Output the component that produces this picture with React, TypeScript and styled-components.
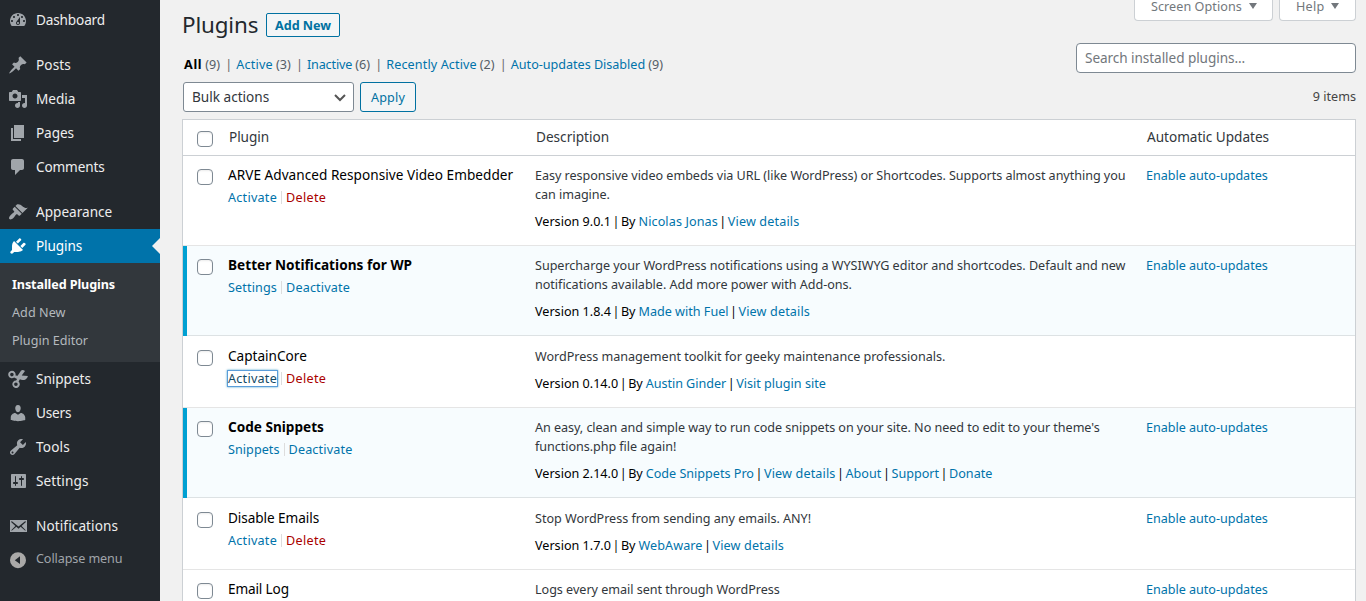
import React from "react";
import styled, { createGlobalStyle, css } from "styled-components";

const GlobalStyle = createGlobalStyle`
  *, *::before, *::after { box-sizing: border-box; }
  html, body { margin: 0; height: 601px; overflow: hidden; background: #f1f1f1; }
  body { font-family: "Noto Sans", sans-serif; font-size: 12.6px; line-height: 19px; color: #32373c; }
`;

const small = css`font-size: 12.6px;`;
const regular = css`font-size: 13.6px;`;

type Tracked = { $track?: number };
const tracking = css<Tracked>`
  letter-spacing: ${({ $track = -0.04 }) => $track}px;
  white-space: nowrap;
`;

const Page = styled.div`
  display: flex;
  height: 601px;
  overflow: hidden;
`;

/* ---------- Sidebar ---------- */

const Sidebar = styled.nav`
  flex: 0 0 160px;
  padding-top: 3px;
  background: #23282d;
`;

const MenuItem = styled.a<Tracked & { $active?: boolean; $gap?: boolean; $muted?: boolean }>`
  ${regular}
  ${tracking}
  position: relative;
  display: flex;
  align-items: center;
  height: 34px;
  margin-top: ${({ $gap }) => ($gap ? 11 : 0)}px;
  padding-left: 8px;
  gap: 8px;
  color: #eee;
  fill: #a0a5aa;
  ${({ $active }) =>
    $active &&
    css`
      background: #0073aa;
      color: #fff;
      fill: #fff;
      &::after {
        content: "";
        position: absolute;
        right: 0;
        top: 9px;
        border: 8px solid transparent;
        border-left: 0;
        border-right-color: #f1f1f1;
      }
    `}
  ${({ $muted }) =>
    $muted &&
    css`
      ${small}
      height: 33px;
      color: #a0a5aa;
      fill: #aaa9a8;
    `}
`;

const MenuIcon = styled.svg`
  flex: 0 0 20px;
  width: 20px;
  height: 20px;
`;

const MenuLabel = styled.span`
  padding-bottom: 2px;
`;

const Submenu = styled.div`
  padding: 8px 0 7px 12px;
  background: #32373c;
`;

const SubmenuItem = styled.a<Tracked & { $current?: boolean }>`
  ${tracking}
  display: block;
  height: 28px;
  line-height: 28px;
  color: ${({ $current }) => ($current ? "#fff" : "#b4b9be")};
  font-weight: ${({ $current }) => ($current ? 700 : 400)};
`;

/* ---------- Header area ---------- */

const Main = styled.main`
  flex: 1;
  padding: 0 10px 0 22px;
`;

const Top = styled.header`
  display: flex;
  justify-content: space-between;
  height: 119px;
`;

const TitleRow = styled.div`
  display: flex;
  align-items: center;
  height: 24px;
  margin-top: 13px;
`;

const Title = styled.h1<Tracked>`
  ${tracking}
  width: 84px;
  margin: 0;
  font-size: 22.4px;
  font-weight: 400;
  line-height: 24px;
  color: #23282d;
`;

const Button = styled.button<Tracked & { $height: number; $width: number; $bold?: boolean }>`
  ${tracking}
  width: ${({ $width }) => $width}px;
  height: ${({ $height }) => $height}px;
  padding: 0;
  border: 1px solid #0071a1;
  border-radius: ${({ $bold }) => ($bold ? 2 : 3)}px;
  background: #f3f5f6;
  color: #0071a1;
  font-family: inherit;
  font-size: 12.6px;
  font-weight: ${({ $bold }) => ($bold ? 700 : 400)};
`;

const Filters = styled.div`
  display: flex;
  align-items: center;
  height: 20px;
  margin: 17px 0 8px 2px;
  color: #666;
`;

const Filter = styled.a<Tracked & { $current?: boolean }>`
  ${tracking}
  color: ${({ $current }) => ($current ? "#000" : "#0073aa")};
  font-weight: ${({ $current }) => ($current ? 700 : 400)};
`;

const Count = styled.span`
  width: 16px;
  margin-left: 3px;
  color: #555d66;
`;

const Divider = styled.span`
  width: 7px;
  margin: 0 4px;
  text-align: center;
`;

const BulkRow = styled.div`
  display: flex;
  gap: 6px;
  padding-left: 1px;
`;

const Select = styled.div`
  ${regular}
  display: flex;
  align-items: center;
  justify-content: space-between;
  width: 171px;
  height: 30px;
  padding: 0 6px 0 8px;
  border: 1px solid #7e8993;
  border-radius: 3px;
  background: #fff;
`;

const Right = styled.div`
  display: flex;
  flex-direction: column;
  align-items: flex-end;
`;

const Tabs = styled.div`
  display: flex;
  gap: 6px;
`;

const Tab = styled.div<Tracked & { $width: number }>`
  ${tracking}
  display: flex;
  align-items: flex-end;
  width: ${({ $width }) => $width}px;
  height: 21px;
  padding: 0 0 4px 16px;
  border: 1px solid #ccd0d4;
  border-top: 0;
  border-radius: 0 0 4px 4px;
  background: #fff;
  color: #72777c;
`;

const Caret = styled.span`
  margin: 0 0 7px 7px;
  border: 4.5px solid transparent;
  border-top: 6.5px solid #72777c;
  border-bottom: 0;
`;

const Search = styled.input`
  ${regular}
  width: 280px;
  height: 30px;
  margin-top: 22px;
  padding: 0 8px 1px;
  border: 1px solid #7e8993;
  border-radius: 4px;
  background: #fff;
  font-family: inherit;
  letter-spacing: -0.07px;
  &::placeholder { color: #72777c; opacity: 1; }
`;

const Items = styled.div`
  height: 20px;
  margin-top: 14px;
  line-height: 20px;
  color: #444;
`;

/* ---------- Table ---------- */

const Table = styled.section`
  height: 500px;
  border: 1px solid #ccd0d4;
  background: #fff;
`;

const grid = css`
  display: grid;
  grid-template-columns: 45px 307px 611px 1fr;
`;

const HeadRow = styled.div`
  ${grid}
  ${regular}
  height: 36px;
  border-bottom: 1px solid #ccd0d4;
  line-height: 34px;
`;

const HeadCell = styled.span<Tracked>`
  ${tracking}
  padding-left: 1px;
`;

const Checkbox = styled.span<{ $top: number }>`
  width: 16px;
  height: 16px;
  margin: ${({ $top }) => $top}px 0 0 14px;
  border: 1px solid #7e8993;
  border-radius: 4px;
  background: #fff;
  box-shadow: inset 0 1px 2px rgba(0, 0, 0, 0.08);
`;

const Row = styled.div<{ $active?: boolean; $height: number; $offset: number }>`
  ${grid}
  height: ${({ $height }) => $height}px;
  padding-top: ${({ $offset }) => $offset}px;
  background: ${({ $active }) => ($active ? "#f7fcfe" : "#fff")};
  box-shadow: inset ${({ $active }) => ($active ? "4px 0 0 #00a0d2, inset " : "")}0 -1px 0 rgba(0, 0, 0, 0.1);
`;

const Name = styled.div<Tracked & { $active?: boolean }>`
  ${regular}
  ${tracking}
  height: 20px;
  line-height: 20px;
  color: #000;
  font-weight: ${({ $active }) => ($active ? 700 : 400)};
`;

const Actions = styled.div`
  display: flex;
  align-items: center;
  height: 20px;
  margin-top: 2px;
`;

const Link = styled.a<Tracked & { $danger?: boolean; $focused?: boolean }>`
  ${tracking}
  color: ${({ $danger }) => ($danger ? "#a00" : "#0073aa")};
  ${({ $focused }) =>
    $focused &&
    css`
      height: 15px;
      line-height: 15px;
      color: #124964;
      box-shadow: 0 0 0 1px #5b9dd9, 0 0 2px 1px rgba(30, 140, 190, 0.8);
    `}
`;

const Bar = styled.span`
  width: 1px;
  height: 13px;
  margin: 0 4px;
  background: #ddd;
`;

const Cell = styled.div`
  padding-top: 1px;
`;

const Text = styled.div<Tracked>`
  ${tracking}
  height: 19px;
`;

const Meta = styled.div`
  display: flex;
  height: 19px;
  margin-top: 8px;
  color: #000;
`;

const MetaText = styled.span<Tracked & { $gap?: number }>`
  ${tracking}
  margin-right: ${({ $gap = 0 }) => $gap}px;
`;

const MetaBar = styled.span`
  width: 10px;
  text-align: center;
`;

/* ---------- Data ---------- */

const paths = {
  dashboard:
    "M3.76 16h12.48c1.1-1.37 1.76-3.11 1.76-5 0-4.42-3.58-8-8-8s-8 3.58-8 8c0 1.89.66 3.63 1.76 5zM10 4c.55 0 1 .45 1 1s-.45 1-1 1-1-.45-1-1 .45-1 1-1zM6 6c.55 0 1 .45 1 1s-.45 1-1 1-1-.45-1-1 .45-1 1-1zm8 0c.55 0 1 .45 1 1s-.45 1-1 1-1-.45-1-1 .45-1 1-1zm-5.37 5.55L12 7v6c0 1.1-.9 2-2 2s-2-.9-2-2c0-.57.24-1.08.63-1.45zM4 10c.55 0 1 .45 1 1s-.45 1-1 1-1-.45-1-1 .45-1 1-1zm12 0c.55 0 1 .45 1 1s-.45 1-1 1-1-.45-1-1 .45-1 1-1zm-5 3c0-.55-.45-1-1-1s-1 .45-1 1 .45 1 1 1 1-.45 1-1z",
  posts:
    "M10.44 3.02l1.82-1.82 6.36 6.35-1.83 1.82c-1.05-.68-2.48-.57-3.41.36l-.75.75c-.92.93-1.04 2.35-.35 3.41l-1.83 1.82-2.41-2.41-2.8 2.79c-.42.42-3.38 2.71-3.8 2.29s1.86-3.39 2.28-3.81l2.79-2.79L4.1 9.36l1.83-1.82c1.05.69 2.48.57 3.4-.36l.75-.75c.93-.92 1.05-2.35.36-3.41z",
  media:
    "M13 11V4c0-.55-.45-1-1-1h-1.67L9 1H5L3.67 3H2c-.55 0-1 .45-1 1v7c0 .55.45 1 1 1h10c.55 0 1-.45 1-1zM7 4.5c1.38 0 2.5 1.12 2.5 2.5S8.38 9.5 7 9.5 4.5 8.38 4.5 7 5.62 4.5 7 4.5zM14 6h5v10.5c0 1.38-1.12 2.5-2.5 2.5S14 17.88 14 16.5s1.12-2.5 2.5-2.5c.17 0 .34.02.5.05V9h-3V6zm-4 8.05V13h2v3.5c0 1.38-1.12 2.5-2.5 2.5S7 17.88 7 16.5 8.12 14 9.5 14c.17 0 .34.02.5.05z",
  pages: "M6 15V2h10v13H6zm-1 1h8v2H3V5h2v11z",
  comments: "M5 2h9c1.1 0 2 .9 2 2v7c0 1.1-.9 2-2 2h-2l-5 5v-5H5c-1.1 0-2-.9-2-2V4c0-1.1.9-2 2-2z",
  appearance:
    "M14.48 11.06L7.41 3.99l1.5-1.5c.5-.56 2.3-.47 3.51.32 1.21.8 1.43 1.28 2.91 2.1 1.18.64 2.45 1.26 4.45.85zm-.71.71L6.7 4.7 4.93 6.47c-.39.39-.39 1.02 0 1.41l1.06 1.06c.39.39.39 1.03 0 1.42-.6.6-1.43 1.11-2.21 1.69-.35.26-.7.53-1.01.84C1.43 14.23.4 16.08 1.4 17.07c.99 1 2.84-.03 4.18-1.36.31-.31.58-.66.85-1.02.57-.78 1.08-1.61 1.69-2.21.39-.39 1.02-.39 1.41 0l1.06 1.06c.39.39 1.02.39 1.41 0z",
  plugins:
    "M13.11 4.36L9.87 7.6 8 5.73l3.24-3.24c.35-.34 1.05-.2 1.56.32.52.51.66 1.21.31 1.55zm-8 1.77l.91-1.12 9.01 9.01-1.19.84c-.71.71-2.63 1.16-3.82 1.16H6.14L4.9 17.26c-.59.59-1.54.59-2.12 0-.59-.58-.59-1.53 0-2.12l1.24-1.24v-3.88c0-1.13.4-3.19 1.09-3.89zm7.26 3.97l3.24-3.24c.34-.35 1.04-.21 1.55.31.52.51.66 1.21.31 1.55l-3.24 3.25z",
  snippets:
    "M3.9 1.8a3.7 3.7 0 1 0 2.2 6.7l3 1.5-1 1.6a3.7 3.7 0 1 0 2.5 1l1.3-2.3c1.4 1 4.3.9 5.6.1 1-.6 1.9-1.6 2.4-3.4l-6.2-.5 3.3-4.4c-1.7-1.4-3.3-1.3-4.2-.1L9.6 6.7 7.5 6.4A3.7 3.7 0 0 0 3.9 1.8zm0 2a1.8 1.8 0 1 1 0 3.6 1.8 1.8 0 0 1 0-3.6zm4 9.7a1.8 1.8 0 1 1 0 3.6 1.8 1.8 0 0 1 0-3.6z",
  users:
    "M10 9.25c-2.27 0-2.73-3.44-2.73-3.44C7 4.02 7.82 2 9.97 2c2.16 0 2.98 2.02 2.71 3.81 0 0-.41 3.44-2.68 3.44zm0 2.57L12.72 10c2.39 0 4.52 2.33 4.52 4.53v2.49s-3.65 1.13-7.24 1.13c-3.65 0-7.24-1.13-7.24-1.13v-2.49c0-2.25 1.94-4.48 4.47-4.48z",
  tools:
    "M16.68 9.77c-1.34 1.34-3.3 1.67-4.95.99l-5.41 6.52c-.99.99-2.59.99-3.58 0s-.99-2.59 0-3.57l6.52-5.42c-.68-1.65-.35-3.61.99-4.95 1.28-1.28 3.12-1.62 4.72-1.06l-2.89 2.89 2.82 2.82 2.86-2.87c.53 1.58.18 3.39-1.08 4.65zM3.81 16.21c.4.39 1.04.39 1.43 0 .4-.4.4-1.04 0-1.43-.39-.4-1.03-.4-1.43 0-.39.39-.39 1.03 0 1.43z",
  settings:
    "M18 16V4c0-.55-.45-1-1-1H4c-.55 0-1 .45-1 1v12c0 .55.45 1 1 1h13c.55 0 1-.45 1-1zM8 11h1c.55 0 1 .45 1 1s-.45 1-1 1H8v1.5c0 .28-.22.5-.5.5s-.5-.22-.5-.5V13H6c-.55 0-1-.45-1-1s.45-1 1-1h1V5.5c0-.28.22-.5.5-.5s.5.22.5.5V11zm5-2h-1c-.55 0-1-.45-1-1s.45-1 1-1h1V5.5c0-.28.22-.5.5-.5s.5.22.5.5V7h1c.55 0 1 .45 1 1s-.45 1-1 1h-1v5.5c0 .28-.22.5-.5.5s-.5-.22-.5-.5V9z",
  notifications:
    "M19 16V4H2v12h17zM17.69 5.39c.33.33.15.67-.03.84L13.6 9.95l3.9 4.06c.12.14.2.36.06.51-.13.16-.43.15-.56.05l-4.37-3.73-2.14 1.95-2.13-1.95-4.37 3.73c-.13.1-.43.11-.56-.05-.14-.15-.06-.37.06-.51l3.9-4.06-4.06-3.72c-.18-.17-.36-.51-.03-.84s.67-.17.95.07l6.24 5.04 6.25-5.04c.28-.24.62-.4.95-.07z",
  collapse: "M10 2.2a8 8 0 1 0 0 16 8 8 0 0 0 0-16zM12 6.3v7.8L6.8 10.2z",
};

type MenuEntry = { label: string; icon: keyof typeof paths; track?: number; gap?: boolean };

const menuTop: MenuEntry[] = [
  { label: "Dashboard", icon: "dashboard", track: -0.15 },
  { label: "Posts", icon: "posts", track: 0.1 },
  { label: "Media", icon: "media" },
  { label: "Pages", icon: "pages", track: -0.1 },
  { label: "Comments", icon: "comments", track: -0.14 },
  { label: "Appearance", icon: "appearance", track: 0, gap: true },
];
menuTop[1].gap = true;

const menuBottom: MenuEntry[] = [
  { label: "Snippets", icon: "snippets" },
  { label: "Users", icon: "users", track: -0.2 },
  { label: "Tools", icon: "tools", track: 0.15 },
  { label: "Settings", icon: "settings", track: 0.1 },
  { label: "Notifications", icon: "notifications", track: 0.1, gap: true },
];

const filters = [
  { label: "All", count: 9, track: 0.7, current: true },
  { label: "Active", count: 3, track: 0.2 },
  { label: "Inactive", count: 6, track: -0.14 },
  { label: "Recently Active", count: 2, track: 0.12 },
  { label: "Auto-updates Disabled", count: 9, track: -0.02 },
];

type Plugin = {
  name: string;
  track?: number;
  lineTrack?: number;
  active?: boolean;
  actions?: string[];
  focused?: boolean;
  lines: string[];
  version?: string;
  links?: string[];
  autoUpdates?: boolean;
  height: number;
  offset?: number;
};

const plugins: Plugin[] = [
  {
    name: "ARVE Advanced Responsive Video Embedder",
    track: 0.03,
    actions: ["Activate", "Delete"],
    lines: [
      "Easy responsive video embeds via URL (like WordPress) or Shortcodes. Supports almost anything you",
      "can imagine.",
    ],
    version: "9.0.1",
    links: ["Nicolas Jonas", "View details"],
    height: 90,
    lineTrack: -0.05,
  },
  {
    name: "Better Notifications for WP",
    track: 0.03,
    active: true,
    actions: ["Settings", "Deactivate"],
    lines: [
      "Supercharge your WordPress notifications using a WYSIWYG editor and shortcodes. Default and new",
      "notifications available. Add more power with Add-ons.",
    ],
    version: "1.8.4",
    links: ["Made with Fuel", "View details"],
    height: 90,
    lineTrack: -0.03,
  },
  {
    name: "CaptainCore",
    track: 0,
    actions: ["Activate", "Delete"],
    focused: true,
    lines: ["WordPress management toolkit for geeky maintenance professionals."],
    version: "0.14.0",
    links: ["Austin Ginder", "Visit plugin site"],
    autoUpdates: false,
    height: 72,
    offset: 10,
    lineTrack: -0.03,
  },
  {
    name: "Code Snippets",
    track: 0,
    active: true,
    actions: ["Snippets", "Deactivate"],
    lines: [
      "An easy, clean and simple way to run code snippets on your site. No need to edit to your theme's",
      "functions.php file again!",
    ],
    version: "2.14.0",
    links: ["Code Snippets Pro", "View details", "About", "Support", "Donate"],
    height: 90,
    lineTrack: -0.055,
  },
  {
    name: "Disable Emails",
    track: -0.07,
    actions: ["Activate", "Delete"],
    lines: ["Stop WordPress from sending any emails. ANY!"],
    version: "1.7.0",
    links: ["WebAware", "View details"],
    height: 72,
    offset: 10,
    lineTrack: -0.03,
  },
  {
    name: "Email Log",
    track: -0.14,
    lines: ["Logs every email sent through WordPress"],
    height: 90,
    lineTrack: -0.03,
  },
];

const linkTrack: Record<string, number> = {
  Activate: 0.25,
  Delete: 0.32,
  Deactivate: 0.16,
  Settings: 0.14,
  Snippets: 0.05,
  "Nicolas Jonas": 0.1,
  "Austin Ginder": -0.04,
  "View details": 0.14,
  WebAware: 0.08,
  About: 0.05,
};

/* ---------- Components ---------- */

const Icon = ({ name }: { name: keyof typeof paths }) => (
  <MenuIcon viewBox="0 0 20 20">
    <path fillRule="evenodd" d={paths[name]} />
  </MenuIcon>
);

const Menu = ({ items }: { items: MenuEntry[] }) => (
  <>
    {items.map((item) => (
      <MenuItem key={item.label} $track={item.track} $gap={item.gap}>
        <Icon name={item.icon} />
        <MenuLabel>{item.label}</MenuLabel>
      </MenuItem>
    ))}
  </>
);

const PluginRow = ({ plugin }: { plugin: Plugin }) => (
  <Row $active={plugin.active} $height={plugin.height} $offset={plugin.offset ?? 9}>
    <Checkbox $top={4} />
    <div>
      <Name $active={plugin.active} $track={plugin.track}>
        {plugin.name}
      </Name>
      {plugin.actions && (
        <Actions>
          {plugin.actions.map((action, i) => (
            <React.Fragment key={action}>
              {i > 0 && <Bar />}
              <Link
                $danger={action === "Delete"}
                $focused={plugin.focused && i === 0}
                $track={linkTrack[action]}
              >
                {action}
              </Link>
            </React.Fragment>
          ))}
        </Actions>
      )}
    </div>
    <Cell>
      {plugin.lines.map((line) => (
        <Text key={line} $track={plugin.lineTrack}>
          {line}
        </Text>
      ))}
      {plugin.version && (
        <Meta>
          <MetaText $track={0}>Version {plugin.version}</MetaText>
          <MetaBar>|</MetaBar>
          <MetaText $gap={3}>By</MetaText>
          {plugin.links?.map((link, i) => (
            <React.Fragment key={link}>
              {i > 0 && <MetaBar>|</MetaBar>}
              <Link $track={linkTrack[link] ?? 0}>{link}</Link>
            </React.Fragment>
          ))}
        </Meta>
      )}
    </Cell>
    {plugin.autoUpdates !== false && (
      <Cell>
        <Link $track={-0.03}>Enable auto-updates</Link>
      </Cell>
    )}
  </Row>
);

export default function App() {
  return (
    <Page>
      <GlobalStyle />
      <Sidebar>
        <Menu items={menuTop} />
        <MenuItem $active $track={-0.1}>
          <Icon name="plugins" />
          <MenuLabel>Plugins</MenuLabel>
        </MenuItem>
        <Submenu>
          <SubmenuItem $current $track={-0.1}>Installed Plugins</SubmenuItem>
          <SubmenuItem $track={0.05}>Add New</SubmenuItem>
          <SubmenuItem $track={0}>Plugin Editor</SubmenuItem>
        </Submenu>
        <Menu items={menuBottom} />
        <MenuItem $muted $track={-0.1}>
          <Icon name="collapse" />
          <MenuLabel>Collapse menu</MenuLabel>
        </MenuItem>
      </Sidebar>
      <Main>
        <Top>
          <div>
            <TitleRow>
              <Title $track={-0.14}>Plugins</Title>
              <Button $bold $width={74} $height={24}>Add New</Button>
            </TitleRow>
            <Filters>
              {filters.map((f, i) => (
                <React.Fragment key={f.label}>
                  {i > 0 && <Divider>|</Divider>}
                  <Filter $current={f.current} $track={f.track}>{f.label}</Filter>
                  <Count>({f.count})</Count>
                </React.Fragment>
              ))}
            </Filters>
            <BulkRow>
              <Select>
                <MenuLabel>Bulk actions</MenuLabel>
                <svg width="14" height="14" viewBox="0 0 14 14" fill="none" stroke="#555" strokeWidth="2">
                  <path d="M2 5l5 5 5-5" />
                </svg>
              </Select>
              <Button $width={56} $height={30} $track={0.15}>Apply</Button>
            </BulkRow>
          </div>
          <Right>
            <Tabs>
              <Tab $width={139} $track={0.06}>Screen Options<Caret /></Tab>
              <Tab $width={77} $track={0.25}>Help<Caret /></Tab>
            </Tabs>
            <Search placeholder="Search installed plugins..." />
            <Items>9 items</Items>
          </Right>
        </Top>
        <Table>
          <HeadRow>
            <Checkbox $top={11} />
            <HeadCell $track={-0.06}>Plugin</HeadCell>
            <HeadCell $track={0}>Description</HeadCell>
            <HeadCell $track={-0.02}>Automatic Updates</HeadCell>
          </HeadRow>
          {plugins.map((p) => (
            <PluginRow key={p.name} plugin={p} />
          ))}
        </Table>
      </Main>
    </Page>
  );
}
